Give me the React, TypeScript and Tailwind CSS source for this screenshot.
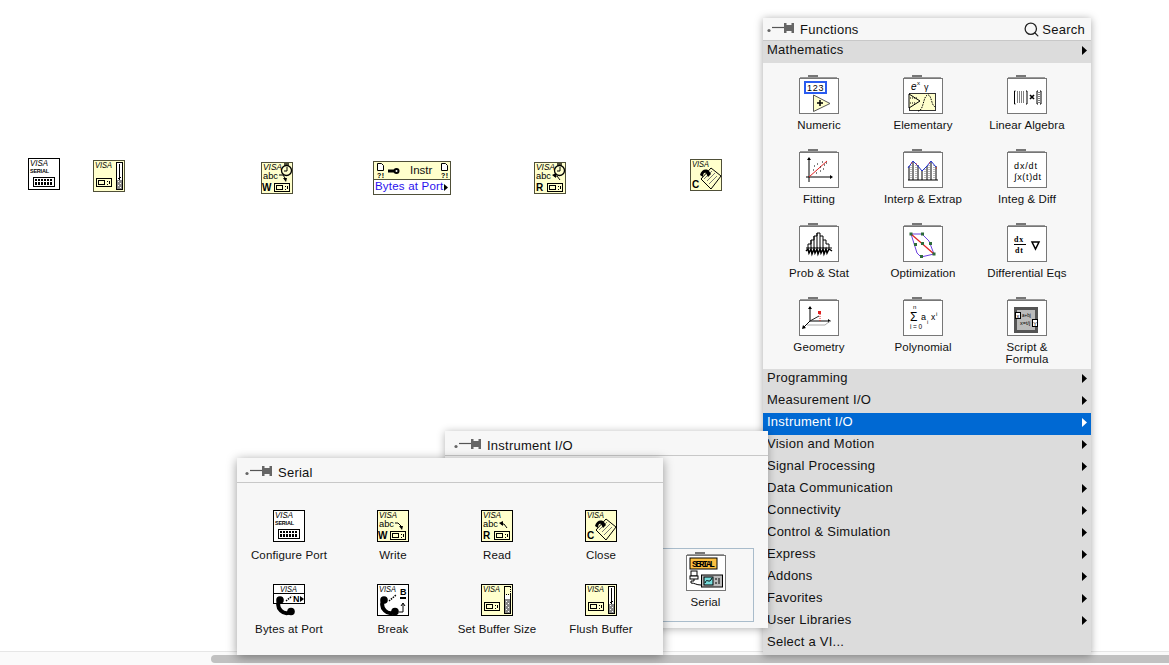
// LabVIEW block diagram with the Functions, Instrument I/O and Serial palettes open.
import type { ReactNode } from "react";
import { Search } from "lucide-react";

const CREAM = "#ffffcc";
const OLIVE = "#4f4f38";

function Pin({ className = "" }: { className?: string }) {
  return (
    <svg width="29" height="12" viewBox="0 0 29 12" className={`shrink-0 ${className}`}>
      <circle cx="3" cy="9.5" r="1.6" fill="#666" />
      <path d="M6 6.5H19" stroke="#555" strokeWidth="1.2" />
      <path d="M18 2H20.5V4H25.5V2H28V12H25.5V10H20.5V12H18Z" fill="#666" />
    </svg>
  );
}

function Tile({ bg = "#fff", border = "#000", children }: { bg?: string; border?: string; children?: ReactNode }) {
  return (
    <svg width="32" height="32" viewBox="0 0 32 32" className="block shrink-0 font-['Liberation_Sans',sans-serif]">
      <rect x="0.5" y="0.5" width="31" height="31" fill={bg} stroke={border} />
      {children}
    </svg>
  );
}

function Visa({ x = 2, y = 8, w = 16 }: { x?: number; y?: number; w?: number }) {
  return (
    <text x={x} y={y} fontSize="8.5" fontStyle="italic" textLength={w} lengthAdjust="spacingAndGlyphs" fill="#000">
      VISA
    </text>
  );
}

function Abc() {
  return (
    <text x="2" y="17" fontSize="9" textLength="15" lengthAdjust="spacingAndGlyphs">
      abc
    </text>
  );
}

function Port({ x, y }: { x: number; y: number }) {
  return (
    <g fill="none" stroke="#000" shapeRendering="crispEdges">
      <rect x={x + 0.5} y={y + 0.5} width="15" height="8" />
      <rect x={x + 2.5} y={y + 2.5} width="6" height="4" />
      <path d={`M${x + 11} ${y + 3}v1M${x + 11} ${y + 5.5}v1M${x + 13} ${y + 3}v3`} />
    </g>
  );
}

function Buffer({ full }: { full?: boolean }) {
  return (
    <g shapeRendering="crispEdges">
      <rect x="23.5" y="2.5" width="6" height="27" fill="#fff" stroke="#000" />
      {!full && <rect x="23.5" y="2.5" width="6" height="8" fill={CREAM} stroke="#000" strokeDasharray="1 1" />}
      {full && <path d="M26.5 4V18" stroke="#000" />}
      {full && <path d="M24.5 17H28.5L26.5 20Z" fill="#000" />}
      <rect x="24" y={full ? 20 : 15} width="5" height={full ? 9 : 14} fill="#888" />
      <path d="M25 21h1M27 23h1M25 25h1M27 27h1M25 17h1M27 19h1" stroke="#fff" />
    </g>
  );
}

function ClockFace() {
  return (
    <g>
      <rect x="23" y="1" width="5" height="3" fill={OLIVE} />
      <circle cx="25.5" cy="8.5" r="5" fill={CREAM} stroke="#000" strokeWidth="1.3" />
      <path d="M26 5V9H23" fill="none" stroke="#000" />
    </g>
  );
}

function WriteIcon({ border = "#000", clock }: { border?: string; clock?: boolean }) {
  return (
    <Tile bg={CREAM} border={border}>
      <Visa w={clock ? 19 : 18} />
      <Abc />
      <path d={clock ? "M18 13H22L24 16" : "M18 13H21L24 16"} fill="none" stroke="#000" />
      <path d="M22 16L26 16L25 20Z" fill="#000" />
      <text x="1" y="29" fontSize="10" fontWeight="700">W</text>
      <Port x={13} y={21} />
      {clock && <ClockFace />}
    </Tile>
  );
}

function ReadIcon({ border = "#000", clock }: { border?: string; clock?: boolean }) {
  return (
    <Tile bg={CREAM} border={border}>
      <Visa w={clock ? 19 : 18} />
      <Abc />
      <path d="M20 14H23L26 18" fill="none" stroke="#000" />
      <path d="M18 13L22 11L22 16Z" fill="#000" />
      <text x="2" y="29" fontSize="10" fontWeight="700">R</text>
      <Port x={13} y={21} />
      {clock && <ClockFace />}
    </Tile>
  );
}

function CloseIcon({ border = "#000" }: { border?: string }) {
  return (
    <Tile bg={CREAM} border={border}>
      <Visa w={17} />
      <path d="M11 20L21 9L31 17L21 30Z" fill={CREAM} stroke="#000" />
      <path d="M14 20L22 12M17 22L25 14M19 25L27 17" stroke="#777" />
      <path d="M10 16C11 11 16 9 19 12L21 15L18 18L16 14C14 13 13 15 13 18Z" fill="#000" />
      <text x="2" y="29" fontSize="10" fontWeight="700">C</text>
    </Tile>
  );
}

function ConfigIcon() {
  return (
    <Tile>
      <Visa w={18} />
      <text x="2" y="15" fontSize="5.5" fontWeight="700" textLength="19">SERIAL</text>
      <g shapeRendering="crispEdges">
        <rect x="5.5" y="19.5" width="21" height="9" fill="#fff" stroke="#000" />
        <path d="M8 21V27M11 21V27M14 21V27M17 21V27M20 21V27M23 21V27" stroke="#000" strokeWidth="2" />
        <path d="M7 23h18" stroke="#fff" />
      </g>
    </Tile>
  );
}

function FlushIcon({ border = "#000" }: { border?: string }) {
  return (
    <Tile bg={CREAM} border={border}>
      <Visa w={17} />
      <Port x={3} y={18} />
      <Buffer full />
    </Tile>
  );
}

function SetBufferIcon() {
  return (
    <Tile bg={CREAM}>
      <Visa w={17} />
      <Port x={3} y={18} />
      <Buffer />
    </Tile>
  );
}

function Phone() {
  return (
    <g>
      <path d="M6 17C3 24 10 32 18 28" fill="none" stroke="#000" strokeWidth="4" />
      <circle cx="7" cy="16" r="3.8" fill="#000" />
      <circle cx="18" cy="27.5" r="3.8" fill="#000" />
    </g>
  );
}

function BytesPortIcon() {
  return (
    <svg width="32" height="32" viewBox="0 0 32 32" className="block shrink-0 font-['Liberation_Sans',sans-serif]">
      <rect x="0.5" y="0.5" width="31" height="19" fill="#fff" stroke="#000" />
      <path d="M0 9.5H32" stroke="#000" />
      <Visa x={7} y={8} w={17} />
      <path d="M13 17L19 12" stroke="#000" strokeDasharray="1.5 1" strokeWidth="1.5" />
      <text x="20" y="18" fontSize="9" fontWeight="700">N</text>
      <path d="M27 12L31 15L27 18Z" fill="#000" />
      <Phone />
    </svg>
  );
}

function BreakIcon() {
  return (
    <Tile>
      <Visa w={17} />
      <Phone />
      <path d="M12 17L19 11" stroke="#000" strokeDasharray="1.5 1" strokeWidth="1.5" />
      <text x="23" y="11" fontSize="9" fontWeight="700">B</text>
      <rect x="23" y="13" width="6" height="2" fill="#000" />
      <path d="M22 28H26V20M24 22L26 19L28 22" fill="none" stroke="#000" />
    </Tile>
  );
}

// palette folder: tab on top, grey frame around a white page
function Folder({ children }: { children?: ReactNode }) {
  return (
    <svg width="40" height="40" viewBox="0 0 40 40" className="block shrink-0 font-['Liberation_Sans',sans-serif]">
      <path d="M1 3.5H38" stroke="#999" />
      <rect x="9" y="1" width="10" height="2" fill="#777" />
      <rect x="0.5" y="4.5" width="39" height="35" fill="#fff" stroke="#777" />
      {children}
    </svg>
  );
}

const folderArt: Record<string, ReactNode> = {
  Numeric: (
    <g>
      <rect x="6" y="8" width="21" height="11" fill="#fff" stroke="#2a5cf0" strokeWidth="2" />
      <text x="8" y="17" fontSize="9" letterSpacing=".7">123</text>
      <path d="M14.5 21L31 29.5L14.5 37.5Z" fill={CREAM} stroke="#555" />
      <path d="M18 29H24M21 26V32" stroke="#000" strokeWidth="1.5" />
    </g>
  ),
  Elementary: (
    <g>
      <text x="8" y="16" fontSize="10" fontStyle="italic">e</text>
      <text x="14" y="11" fontSize="6">x</text>
      <text x="21" y="16" fontSize="9">γ</text>
      <rect x="6.5" y="19.5" width="26" height="17" fill={CREAM} stroke="#333" />
      <path d="M6 20L17 27L6 34Z" fill={CREAM} stroke="#000" />
      <path d="M7 24H14M7 29H12" stroke="#000" strokeDasharray="1 1" />
      <path d="M15 37C21 37 20 21 25 21C29 21 28 33 33 33" fill="none" stroke="#000" strokeDasharray="1.5 1" />
    </g>
  ),
  "Linear Algebra": (
    <g stroke="#000" fill="none">
      <path d="M8.5 17H7.5V30H8.5M19 17H20V30H19" />
      <path d="M10 18H18M10 20H18M10 22H18M10 24H18M10 26H18M10 28H18" strokeDasharray="1 1" />
      <path d="M23 21L27 25M27 21L23 25" strokeWidth="1.6" />
      <path d="M31 17H30V30H31M33 17H34V30H33" />
      <path d="M32 18V29" strokeDasharray="1 1" />
    </g>
  ),
  Fitting: (
    <g>
      <path d="M7 29H31M10 11V34" stroke="#000" />
      <path d="M31 27L34 29L31 31ZM8 12L10 9L12 12Z" fill="#000" />
      <path d="M10 29L28 13" stroke="#e02020" />
      <path d="M14 22h1M18 16h1M21 19h1M23 14h1M25 17h1M27 15h1M17 25h1M21 23h1M15 18h1M24 21h1" stroke="#000" />
    </g>
  ),
  "Interp & Extrap": (
    <g>
      <path d="M5 32H35" stroke="#000" />
      <path d="M6 32V18M10 32V14M15 32V17M19 32V22M24 32V18M28 32V14M33 32V18" stroke="#000" />
      <path d="M8 32V16M13 32V16M22 32V20M26 32V16M31 32V16" stroke="#777" strokeDasharray="1 1" />
      <path d="M5 20L10 13L15 18L19 23L24 18L28 13L33 19" fill="none" stroke="#2030d0" />
      <path d="M8 15h1M13 16h1M26 15h1M33 20h1" stroke="#e02020" />
    </g>
  ),
  "Integ & Diff": (
    <g>
      <text x="7" y="21" fontSize="9" textLength="23">dx/dt</text>
      <text x="7" y="32" fontSize="9" textLength="27">∫x(t)dt</text>
    </g>
  ),
  "Prob & Stat": (
    <g>
      <path d="M7 26H33" stroke="#000" />
      <path d="M9 26V22H12V18H15V14H18V11H21V14H24V18H27V22H30V26M15 26V14M18 26V11M21 26V14M12 26V18M24 26V18" fill="none" stroke="#000" />
      <path d="M7 29L9 27L10 31L12 27L13 32L15 27L16 31L18 27L19 32L21 27L22 31L24 27L25 32L27 27L28 31L30 27L33 29" fill="none" stroke="#000" strokeWidth="1.5" />
    </g>
  ),
  Optimization: (
    <g>
      <path d="M8 12L19 12L26 19L31 32L18 35L14 31Z" fill="none" stroke="#6b40e0" />
      <path d="M8 12L31 32" stroke="#e02020" strokeWidth="1.2" />
      <g fill="#2e6b3a">
        <rect x="6.5" y="10.5" width="3" height="3" />
        <rect x="18" y="10.5" width="3" height="3" />
        <rect x="18" y="20" width="3" height="3" />
        <rect x="11" y="21" width="3" height="3" />
        <rect x="26" y="20" width="3" height="3" />
        <rect x="29.5" y="30.5" width="3" height="3" />
        <rect x="17" y="33" width="3" height="3" />
      </g>
    </g>
  ),
  "Differential Eqs": (
    <g>
      <text x="7" y="20" fontSize="8" fontWeight="700" fontFamily="'Liberation Serif',serif" letterSpacing=".8">dx</text>
      <path d="M7 22.5H19" stroke="#000" />
      <text x="8" y="31" fontSize="8" fontWeight="700" fontFamily="'Liberation Serif',serif" letterSpacing=".8">dt</text>
      <path d="M25 20H32L28.5 27Z" fill="none" stroke="#000" strokeWidth="1.5" />
    </g>
  ),
  Geometry: (
    <g>
      <path d="M11 11V25L30 25M11 25L4 32" stroke="#000" fill="none" />
      <path d="M9 13L11 10L13 13ZM29 23L32 25L29 27ZM4 29L3 33L7 32Z" fill="#000" />
      <path d="M11 25L20 20" stroke="#222" />
      <path d="M8 29L26 29L31 25" stroke="#aaa" fill="none" />
      <path d="M21 25V17" stroke="#e02020" strokeDasharray="1 1" />
      <rect x="19" y="15" width="3" height="3" fill="#e02020" />
    </g>
  ),
  Polynomial: (
    <g>
      <text x="10" y="13" fontSize="6">n</text>
      <text x="7" y="25" fontSize="12">Σ</text>
      <text x="7" y="33" fontSize="6.5" textLength="12">i=0</text>
      <text x="18" y="24" fontSize="9">a</text>
      <text x="24" y="28" fontSize="5.5">i</text>
      <text x="28" y="24" fontSize="8.5">x</text>
      <text x="33" y="20" fontSize="6">i</text>
    </g>
  ),
  "Script & Formula": (
    <g>
      <rect x="7" y="11" width="24" height="26" fill="#555" />
      <rect x="10" y="14" width="18" height="20" fill="#bbb" />
      <rect x="8.5" y="16.5" width="5" height="6" fill="#fff" stroke="#000" />
      <text x="9.5" y="22" fontSize="5.5">x</text>
      <rect x="25.5" y="23.5" width="5" height="7" fill="#fff" stroke="#000" />
      <text x="26.2" y="29.5" fontSize="5.5">Y</text>
      <text x="15" y="21" fontSize="4.5">a+bj</text>
      <text x="13" y="29" fontSize="5.5">x=t/j</text>
    </g>
  ),
  Serial: (
    <g>
      <rect x="4" y="7" width="27" height="11" fill="#fdc040" stroke="#000" />
      <text x="6" y="15.5" fontSize="9" fontWeight="700" fontFamily="'Liberation Mono',monospace" textLength="23">SERIAL</text>
      <rect x="5" y="20" width="6" height="5" fill="#fff" stroke="#000" />
      <rect x="4" y="25" width="8" height="3" fill="#fff" stroke="#000" />
      <path d="M8 28V30H5V32C9 32 10 34 15 34" fill="none" stroke="#000" />
      <rect x="15.5" y="24" width="21" height="12" fill="#bbb" stroke="#000" />
      <rect x="18" y="26" width="9" height="8" fill="#7dd" stroke="#000" />
      <path d="M19 32C21 26 23 34 26 27" fill="none" stroke="#000" />
      <path d="M30 27v2M33 27v6M30 31v2" stroke="#000" />
    </g>
  ),
};

function FolderCell({ name }: { name: string }) {
  return (
    <div className="flex flex-col items-center">
      <Folder>{folderArt[name]}</Folder>
      <div className="mt-[5px] text-center text-[11.5px] leading-[12px] tracking-[0.1px] text-[#111]">
        {name === "Script & Formula" ? (
          <>
            Script &<br />
            Formula
          </>
        ) : (
          name
        )}
      </div>
    </div>
  );
}

function Arrow({ white }: { white?: boolean }) {
  return (
    <svg width="5" height="9" viewBox="0 0 5 9" className="shrink-0">
      <path d="M0 0L5 4.5L0 9Z" fill={white ? "#fff" : "#000"} />
    </svg>
  );
}

function MenuRow({ label, active, arrow = true }: { label: string; active?: boolean; arrow?: boolean }) {
  return (
    <div className={`flex h-[22px] items-center justify-between pb-[4px] pl-1 pr-[4px] text-[13px] tracking-[0.25px] ${active ? "bg-[#0069d3] text-white" : "text-[#111]"}`}>
      <span>{label}</span>
      {arrow && <Arrow white={active} />}
    </div>
  );
}

const menuRows = [
  "Programming",
  "Measurement I/O",
  "Instrument I/O",
  "Vision and Motion",
  "Signal Processing",
  "Data Communication",
  "Connectivity",
  "Control & Simulation",
  "Express",
  "Addons",
  "Favorites",
  "User Libraries",
];

const mathFolders = [
  "Numeric",
  "Elementary",
  "Linear Algebra",
  "Fitting",
  "Interp & Extrap",
  "Integ & Diff",
  "Prob & Stat",
  "Optimization",
  "Differential Eqs",
  "Geometry",
  "Polynomial",
  "Script & Formula",
];

const serialItems: { label: string; icon: ReactNode }[] = [
  { label: "Configure Port", icon: <ConfigIcon /> },
  { label: "Write", icon: <WriteIcon /> },
  { label: "Read", icon: <ReadIcon /> },
  { label: "Close", icon: <CloseIcon /> },
  { label: "Bytes at Port", icon: <BytesPortIcon /> },
  { label: "Break", icon: <BreakIcon /> },
  { label: "Set Buffer Size", icon: <SetBufferIcon /> },
  { label: "Flush Buffer", icon: <FlushIcon /> },
];

function NodeFlag() {
  return (
    <svg width="7" height="15" viewBox="0 0 7 15" className="shrink-0 font-['Liberation_Sans',sans-serif]">
      <path d="M0.5 0.5H4.5L6.5 2.5V7.5H0.5Z" fill="#fff" stroke="#000" />
      <text x="0" y="15" fontSize="7" fontWeight="700" textLength="7">?!</text>
    </svg>
  );
}

function PropertyNode() {
  return (
    <div className="flex h-[34px] w-[78px] flex-col border border-[#4f4f38] text-[11.5px] leading-none">
      <div className="flex h-[17px] items-center bg-[#ffffcc] pl-[3px] pr-[2px]">
        <NodeFlag />
        <svg width="12" height="8" viewBox="0 0 12 8" className="ml-[4px] shrink-0">
          <path d="M0 2.5H6V5.5H0Z" fill="#000" />
          <circle cx="8.5" cy="4" r="3" fill="#000" />
          <circle cx="8.5" cy="4" r="1" fill="#fff" />
        </svg>
        <span className="ml-[10px] text-[#111]">Instr</span>
        <span className="flex-1" />
        <NodeFlag />
      </div>
      <div className="flex flex-1 items-center justify-between border-t border-[#4f4f38] bg-white pl-[1px] pr-[2px] tracking-[0.2px] text-[#2a10ee]">
        <span>Bytes at Port</span>
        <svg width="4" height="7" viewBox="0 0 4 7" className="shrink-0">
          <path d="M0 0L4 3.5L0 7Z" fill="#000" />
        </svg>
      </div>
    </div>
  );
}

export default function App() {
  return (
    <div className="relative h-[665px] w-[1169px] overflow-hidden bg-white font-['Liberation_Sans',Arial,sans-serif]">
      {/* block diagram nodes */}
      <div className="absolute left-[28px] top-[158px]"><ConfigIcon /></div>
      <div className="absolute left-[93px] top-[160px]"><FlushIcon border={OLIVE} /></div>
      <div className="absolute left-[261px] top-[162px]"><WriteIcon border={OLIVE} clock /></div>
      <div className="absolute left-[373px] top-[161px]"><PropertyNode /></div>
      <div className="absolute left-[534px] top-[162px]"><ReadIcon border={OLIVE} clock /></div>
      <div className="absolute left-[690px] top-[159px]"><CloseIcon border={OLIVE} /></div>

      {/* horizontal scrollbar track */}
      <div className="absolute inset-x-0 bottom-0 h-[14px] border-t border-[#e6e6e6] bg-[#fafafa]">
        <div className="ml-[211px] mt-[3px] h-[8px] rounded-l-full bg-[#c1c1c1]" />
      </div>

      {/* Functions palette */}
      <div className="absolute left-[763px] top-[18px] flex h-[637px] w-[328px] flex-col bg-[#f7f7f7] shadow-[0_1px_8px_rgba(0,0,0,0.35)]">
        <div className="flex h-[23px] shrink-0 items-center justify-between border-b border-[#c8c8c8] pl-[3px] pr-[6px] text-[13px] tracking-[0.25px] text-[#111]">
          <div className="flex items-center gap-[5px]">
            <Pin className="-translate-y-[2px]" />
            <span className="pt-[2px]">Functions</span>
          </div>
          <div className="flex items-center gap-[2px]">
            <Search size={17} strokeWidth={1.8} color="#222" />
            <span className="pt-[2px]">Search</span>
          </div>
        </div>
        <div className="shrink-0 bg-[#dcdcdc]">
          <MenuRow label="Mathematics" />
        </div>
        <div className="grid h-[306px] shrink-0 grid-cols-[repeat(3,104px)] auto-rows-[74px] pl-[4px] pt-[11px]">
          {mathFolders.map((name) => (
            <FolderCell key={name} name={name} />
          ))}
        </div>
        <div className="flex-1 bg-[#dcdcdc]">
          {menuRows.map((label) => (
            <MenuRow key={label} label={label} active={label === "Instrument I/O"} />
          ))}
          <MenuRow label="Select a VI..." arrow={false} />
        </div>
      </div>

      {/* Instrument I/O palette */}
      <div className="absolute left-[445px] top-[431px] flex h-[197px] w-[323px] flex-col bg-[#f7f7f7] shadow-[0_1px_8px_rgba(0,0,0,0.3)]">
        <div className="flex h-[25px] shrink-0 items-center gap-[5px] border-b border-[#c8c8c8] pl-[8px] text-[13px] tracking-[0.25px] text-[#111]">
          <Pin />
          <span className="pt-[6px]">Instrument I/O</span>
        </div>
        <div className="ml-[212px] mt-[92px] flex h-[74px] w-[97px] flex-col items-center border border-[#a9bccb] pt-[2px]">
          <FolderCell name="Serial" />
        </div>
      </div>

      {/* Serial palette */}
      <div className="absolute left-[237px] top-[458px] flex h-[197px] w-[426px] flex-col bg-[#f7f7f7] shadow-[0_2px_10px_rgba(0,0,0,0.4)]">
        <div className="flex h-[25px] shrink-0 items-center gap-[5px] border-b border-[#c8c8c8] pl-[7px] text-[13px] tracking-[0.25px] text-[#111]">
          <Pin />
          <span className="pt-[6px]">Serial</span>
        </div>
        <div className="grid grid-cols-[repeat(4,104px)] auto-rows-[74px] pt-[27px]">
          {serialItems.map((item) => (
            <div key={item.label} className="flex flex-col items-center">
              {item.icon}
              <div className="mt-[7px] text-[11.5px] leading-[12px] tracking-[0.15px] text-[#111]">{item.label}</div>
            </div>
          ))}
        </div>
      </div>
    </div>
  );
}
